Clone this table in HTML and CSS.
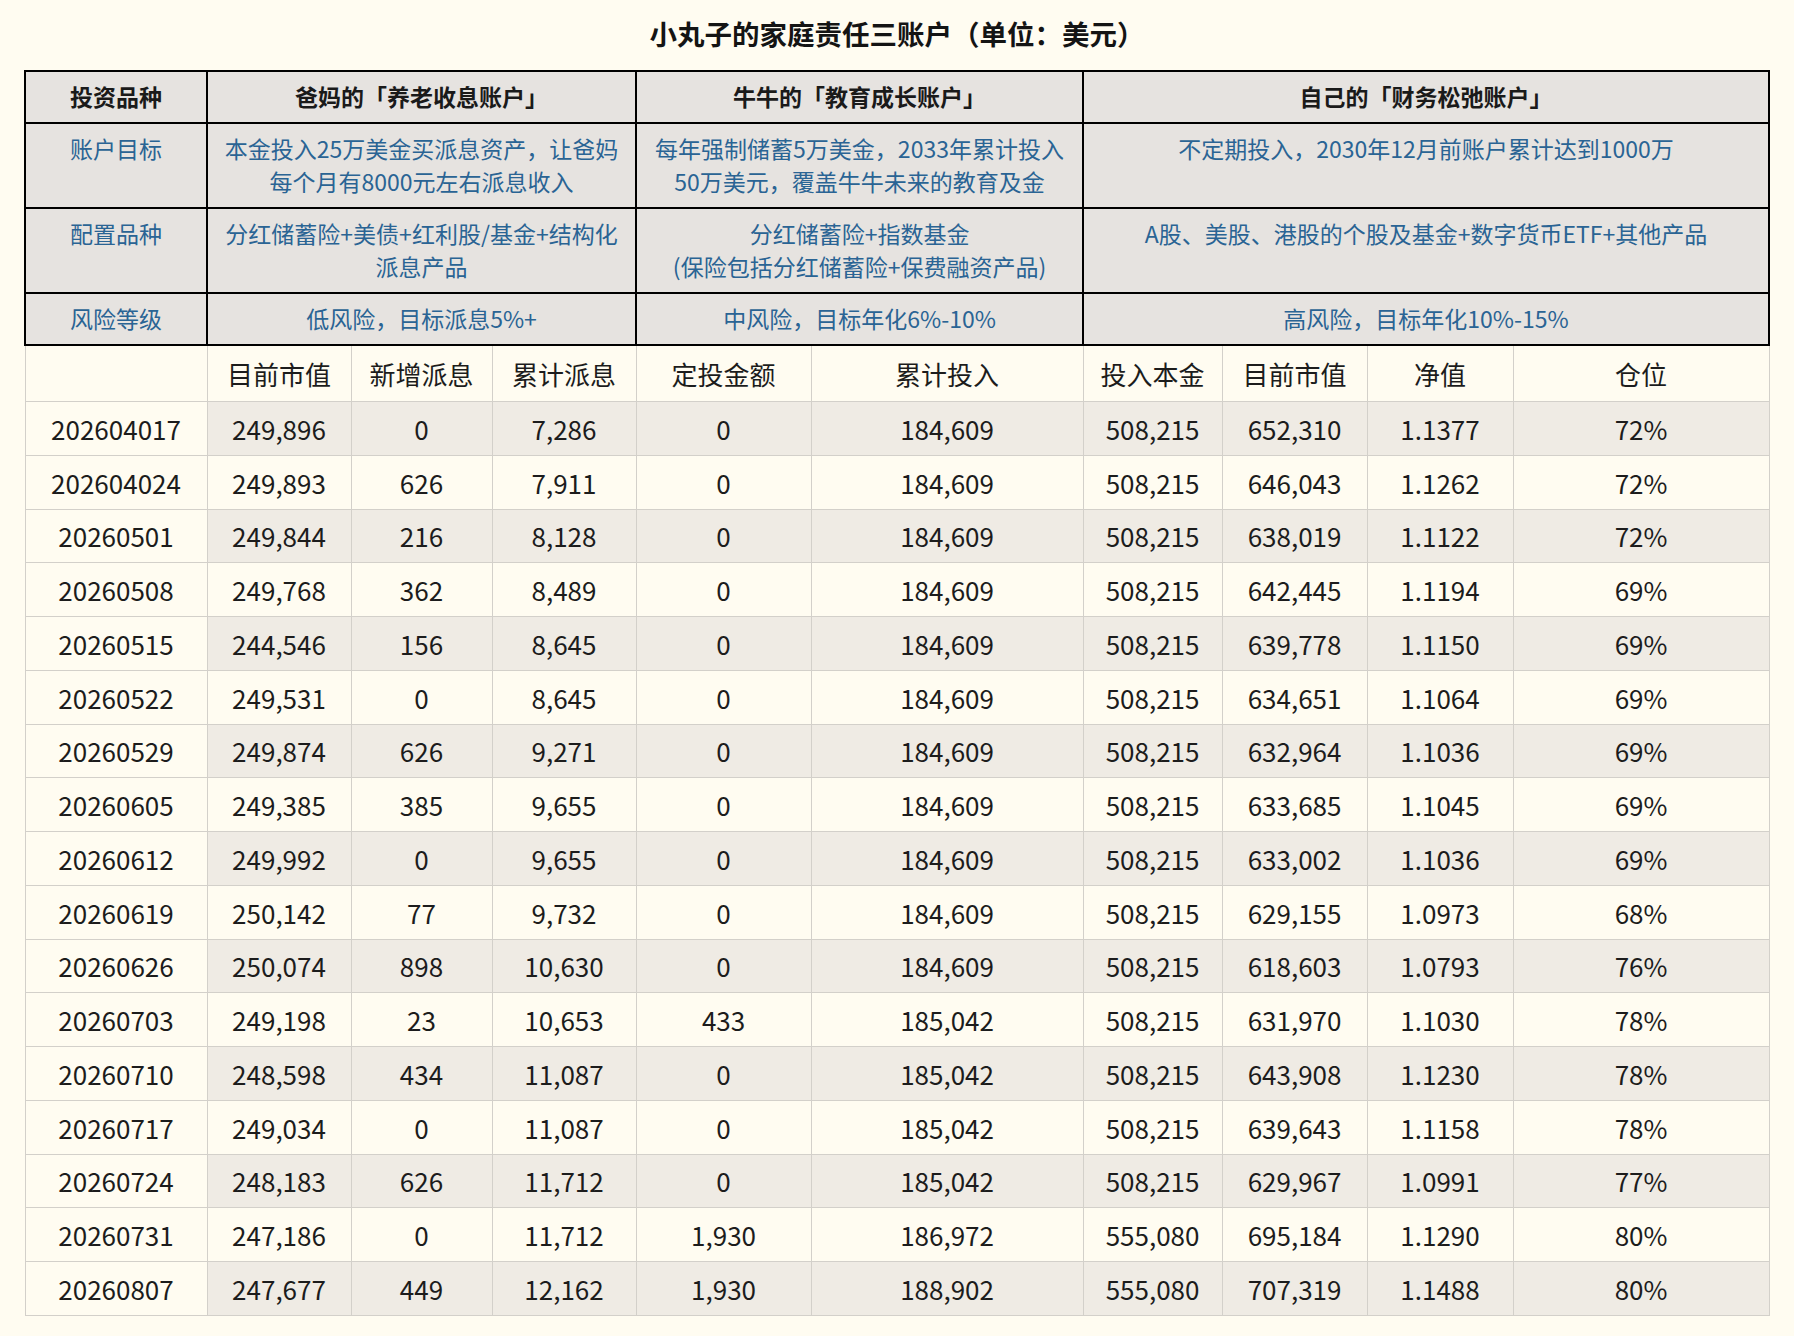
FILE: index.html
```html
<!DOCTYPE html>
<html lang="zh-CN">
<head>
<meta charset="utf-8">
<title>小丸子的家庭责任三账户</title>
<link rel="stylesheet" href="styles.css">
</head>
<body>
<h1 class="title">小丸子的家庭责任三账户（单位：美元）</h1>
<table class="ledger">
  <colgroup>
    <col style="width:182px"><col style="width:144px"><col style="width:141px"><col style="width:144px"><col style="width:175px"><col style="width:272px"><col style="width:139px"><col style="width:145px"><col style="width:146px"><col style="width:256px">
  </colgroup>
  <tbody>
    <tr class="plan plan-head">
      <th>投资品种</th>
      <th colspan="3">爸妈的「养老收息账户」</th>
      <th colspan="2">牛牛的「教育成长账户」</th>
      <th colspan="4">自己的「财务松弛账户」</th>
    </tr>
    <tr class="plan">
      <td>账户目标</td>
      <td colspan="3">本金投入25万美金买派息资产，让爸妈<br>每个月有8000元左右派息收入</td>
      <td colspan="2">每年强制储蓄5万美金，2033年累计投入<br>50万美元，覆盖牛牛未来的教育及金</td>
      <td colspan="4">不定期投入，2030年12月前账户累计达到1000万</td>
    </tr>
    <tr class="plan">
      <td>配置品种</td>
      <td colspan="3">分红储蓄险+美债+红利股/基金+结构化<br>派息产品</td>
      <td colspan="2">分红储蓄险+指数基金<br>(保险包括分红储蓄险+保费融资产品)</td>
      <td colspan="4">A股、美股、港股的个股及基金+数字货币ETF+其他产品</td>
    </tr>
    <tr class="plan">
      <td>风险等级</td>
      <td colspan="3">低风险，目标派息5%+</td>
      <td colspan="2">中风险，目标年化6%-10%</td>
      <td colspan="4">高风险，目标年化10%-15%</td>
    </tr>
    <tr class="data-head">
      <td></td><td>目前市值</td><td>新增派息</td><td>累计派息</td><td>定投金额</td><td>累计投入</td><td>投入本金</td><td>目前市值</td><td>净值</td><td>仓位</td>
    </tr>
    <tr class="row shade"><td>202604017</td><td>249,896</td><td>0</td><td>7,286</td><td>0</td><td>184,609</td><td>508,215</td><td>652,310</td><td>1.1377</td><td>72%</td></tr>
    <tr class="row"><td>202604024</td><td>249,893</td><td>626</td><td>7,911</td><td>0</td><td>184,609</td><td>508,215</td><td>646,043</td><td>1.1262</td><td>72%</td></tr>
    <tr class="row shade"><td>20260501</td><td>249,844</td><td>216</td><td>8,128</td><td>0</td><td>184,609</td><td>508,215</td><td>638,019</td><td>1.1122</td><td>72%</td></tr>
    <tr class="row"><td>20260508</td><td>249,768</td><td>362</td><td>8,489</td><td>0</td><td>184,609</td><td>508,215</td><td>642,445</td><td>1.1194</td><td>69%</td></tr>
    <tr class="row shade"><td>20260515</td><td>244,546</td><td>156</td><td>8,645</td><td>0</td><td>184,609</td><td>508,215</td><td>639,778</td><td>1.1150</td><td>69%</td></tr>
    <tr class="row"><td>20260522</td><td>249,531</td><td>0</td><td>8,645</td><td>0</td><td>184,609</td><td>508,215</td><td>634,651</td><td>1.1064</td><td>69%</td></tr>
    <tr class="row shade"><td>20260529</td><td>249,874</td><td>626</td><td>9,271</td><td>0</td><td>184,609</td><td>508,215</td><td>632,964</td><td>1.1036</td><td>69%</td></tr>
    <tr class="row"><td>20260605</td><td>249,385</td><td>385</td><td>9,655</td><td>0</td><td>184,609</td><td>508,215</td><td>633,685</td><td>1.1045</td><td>69%</td></tr>
    <tr class="row shade"><td>20260612</td><td>249,992</td><td>0</td><td>9,655</td><td>0</td><td>184,609</td><td>508,215</td><td>633,002</td><td>1.1036</td><td>69%</td></tr>
    <tr class="row"><td>20260619</td><td>250,142</td><td>77</td><td>9,732</td><td>0</td><td>184,609</td><td>508,215</td><td>629,155</td><td>1.0973</td><td>68%</td></tr>
    <tr class="row shade"><td>20260626</td><td>250,074</td><td>898</td><td>10,630</td><td>0</td><td>184,609</td><td>508,215</td><td>618,603</td><td>1.0793</td><td>76%</td></tr>
    <tr class="row"><td>20260703</td><td>249,198</td><td>23</td><td>10,653</td><td>433</td><td>185,042</td><td>508,215</td><td>631,970</td><td>1.1030</td><td>78%</td></tr>
    <tr class="row shade"><td>20260710</td><td>248,598</td><td>434</td><td>11,087</td><td>0</td><td>185,042</td><td>508,215</td><td>643,908</td><td>1.1230</td><td>78%</td></tr>
    <tr class="row"><td>20260717</td><td>249,034</td><td>0</td><td>11,087</td><td>0</td><td>185,042</td><td>508,215</td><td>639,643</td><td>1.1158</td><td>78%</td></tr>
    <tr class="row shade"><td>20260724</td><td>248,183</td><td>626</td><td>11,712</td><td>0</td><td>185,042</td><td>508,215</td><td>629,967</td><td>1.0991</td><td>77%</td></tr>
    <tr class="row"><td>20260731</td><td>247,186</td><td>0</td><td>11,712</td><td>1,930</td><td>186,972</td><td>555,080</td><td>695,184</td><td>1.1290</td><td>80%</td></tr>
    <tr class="row shade"><td>20260807</td><td>247,677</td><td>449</td><td>12,162</td><td>1,930</td><td>188,902</td><td>555,080</td><td>707,319</td><td>1.1488</td><td>80%</td></tr>
  </tbody>
</table>
</body>
</html>
```

FILE: styles.css
```css
html, body {
  margin: 0;
  padding: 0;
  background: #fffcf1;
}

body {
  font-family: "Noto Sans CJK SC", "Noto Sans", sans-serif;
  color: #1c1c1c;
}

.title {
  margin: 0 0 17px;
  padding-top: 15px;
  height: 53px;
  box-sizing: border-box;
  line-height: 36px;
  font-size: 27.5px;
  font-weight: 700;
  text-align: center;
  color: #141414;
}

.ledger {
  margin: 0 0 0 24px;
  width: 1744px;
  table-layout: fixed;
  border-collapse: collapse;
}

.ledger td,
.ledger th {
  padding: 0;
  text-align: center;
  white-space: nowrap;
}

.plan td,
.plan th {
  background: #e6e3e0;
  border: 2px solid #000;
  padding: 8px 4px 9px;
  font-size: 23px;
  line-height: 33px;
  vertical-align: top;
  color: #2a6494;
  font-weight: 400;
}

.plan-head th {
  color: #1a1a1a;
  font-weight: 700;
}

.data-head td,
.row td {
  border: 1px solid #d3d0ca;
  font-size: 26px;
  vertical-align: middle;
  color: #1c1c1c;
}

.data-head td {
  height: 55px;
  background: #fffcf1;
}

.row td {
  height: 52.75px;
  background: #fffcf1;
}

.row.shade td {
  background: #efebe4;
}

.row.shade td:first-child {
  background: #fffcf1;
}
```
